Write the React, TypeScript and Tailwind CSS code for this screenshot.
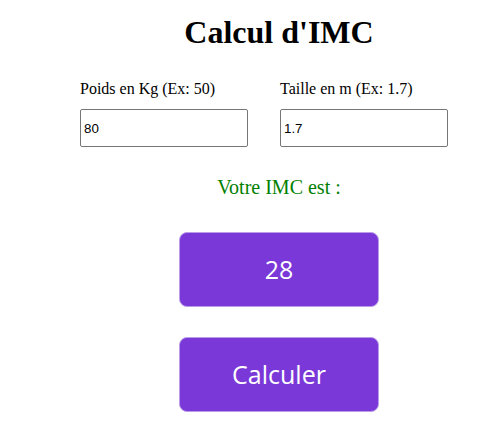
export default function App() {
  return (
    <div className="w-[490px] h-[427px] bg-white font-['Liberation_Serif',serif] text-black">
      <div className="ml-[80px] w-[398px] pt-[14px]">
        <h1 className="text-center text-[32px] leading-[37px] font-bold">Calcul d'IMC</h1>

        <div className="mt-[29px] flex gap-[32px]">
          <div className="flex flex-col">
            <label className="text-[16px] leading-[18px]">Poids en Kg (Ex: 50)</label>
            <input
              type="text"
              defaultValue="80"
              className="mt-[11px] w-[168px] h-[38px] px-[3px] border border-[#767676] rounded-[2px] font-['Liberation_Sans',sans-serif] text-[13.33px] outline-none"
            />
          </div>
          <div className="flex flex-col">
            <label className="text-[16px] leading-[18px]">Taille en m (Ex: 1.7)</label>
            <input
              type="text"
              defaultValue="1.7"
              className="mt-[11px] w-[168px] h-[38px] px-[3px] border border-[#767676] rounded-[2px] font-['Liberation_Sans',sans-serif] text-[13.33px] outline-none"
            />
          </div>
        </div>

        <p className="mt-[29px] text-center text-[20px] leading-[23px] text-[#008000]">Votre IMC est :</p>

        <div className="mt-[33px] flex flex-col items-center gap-[30px] font-['Open_Sans',sans-serif]">
          <div className="w-[200px] h-[75px] flex items-center justify-center rounded-[8px] border border-[#b99de8] bg-[#7b38d8] text-white text-[25px]">
            28
          </div>
          <button className="w-[200px] h-[75px] flex items-center justify-center rounded-[8px] border border-[#b99de8] bg-[#7b38d8] text-white text-[25px]">
            Calculer
          </button>
        </div>
      </div>
    </div>
  );
}
